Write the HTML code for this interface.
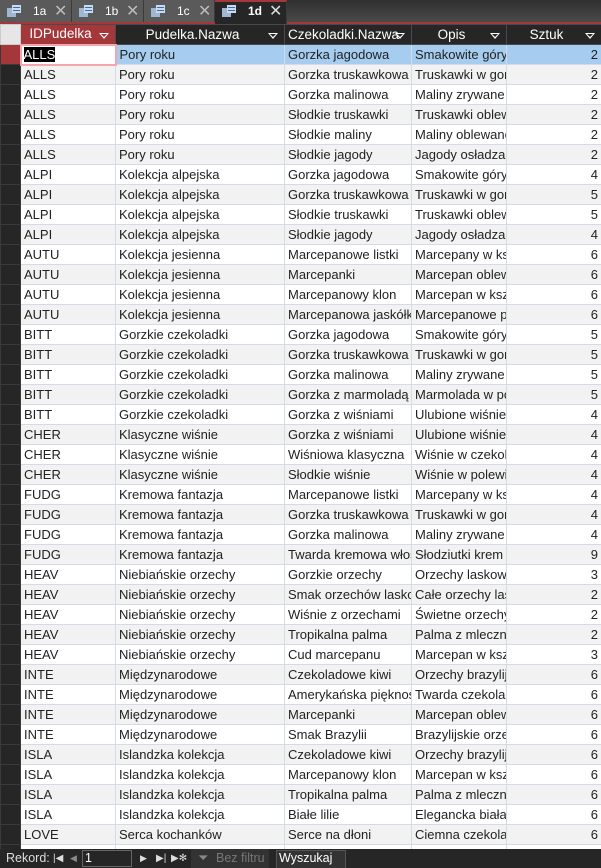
<!DOCTYPE html>
<html><head><meta charset="utf-8"><style>
*{margin:0;padding:0;box-sizing:border-box}
body{width:601px;height:868px;overflow:hidden;background:#262626;font-family:"Liberation Sans",sans-serif;font-size:13px;position:relative}
.tabs{position:absolute;left:0;top:0;width:601px;height:24px;background:linear-gradient(#2f2f2f,#4a4a4a);border-bottom:2px solid #a4373a}
.tab{position:absolute;top:0;height:22px;background:#5a5a5a;color:#fff;font-size:12px;border-right:1px solid #3a3a3a}
.tab.act{background:#262626;border-top:2px solid #a4373a;height:24px}
.tab .ic{position:absolute;left:7px;top:5px;width:14px;height:12px}
.tab .lb{position:absolute;left:33px;top:4px}
.tab .x{position:absolute;left:54px;top:1px;font-size:16px;color:#bbb}
table{position:absolute;left:0;top:24px;width:601px;border-collapse:collapse;table-layout:fixed}
td,th{height:20px;padding:0 3px;white-space:nowrap;overflow:hidden;text-overflow:clip;border:1px solid #d5dbe6;line-height:18px;font-weight:normal}
th{background:#262626;color:#fff;border:1px solid #4a4a4a;text-align:center;position:relative;font-size:13.5px;padding-right:18px}
th .dd{position:absolute;right:6px;top:8px;width:0;height:0;border-left:5px solid transparent;border-right:5px solid transparent;border-top:6px solid #fff}
th .dd:after{content:"";position:absolute;left:-3px;top:-5px;border-left:3px solid transparent;border-right:3px solid transparent;border-top:3px solid #262626}
th.r .dd:after{border-top-color:#a4373a}
td{color:#222;background:#fff}
tr:nth-child(odd) td{background:#f2f2f2}
td.s{background:#262626!important;border:1px solid #3a3a3a;padding:0}
td.n{text-align:right}
tr.sel td{background:#a6cdf0}
tr.sel td.s{background:#a4373a!important}
.nav{position:absolute;left:0;top:849px;width:601px;height:19px;background:#262626;color:#ddd;font-size:12.5px}
.nav span{position:absolute;top:2px}
</style></head><body>
<div class="tabs">
<div class="tab" style="left:0;width:72px"><svg class="ic" viewBox="0 0 14 12"><rect x="0" y="3" width="9" height="9" fill="#9fb8d0"/><rect x="5" y="0" width="9" height="8" fill="#c8dcef"/><rect x="6" y="2" width="7" height="1" fill="#46a"/><rect x="6" y="5" width="7" height="1" fill="#46a"/></svg><span class="lb">1a</span><span class="x">✕</span></div>
<div class="tab" style="left:72px;width:72px"><svg class="ic" viewBox="0 0 14 12"><rect x="0" y="3" width="9" height="9" fill="#9fb8d0"/><rect x="5" y="0" width="9" height="8" fill="#c8dcef"/><rect x="6" y="2" width="7" height="1" fill="#46a"/><rect x="6" y="5" width="7" height="1" fill="#46a"/></svg><span class="lb">1b</span><span class="x">✕</span></div>
<div class="tab" style="left:144px;width:71px"><svg class="ic" viewBox="0 0 14 12"><rect x="0" y="3" width="9" height="9" fill="#9fb8d0"/><rect x="5" y="0" width="9" height="8" fill="#c8dcef"/><rect x="6" y="2" width="7" height="1" fill="#46a"/><rect x="6" y="5" width="7" height="1" fill="#46a"/></svg><span class="lb">1c</span><span class="x">✕</span></div>
<div class="tab act" style="left:215px;width:72px"><svg class="ic" viewBox="0 0 14 12" style="top:3px"><rect x="0" y="3" width="9" height="9" fill="#9fb8d0"/><rect x="5" y="0" width="9" height="8" fill="#c8dcef"/><rect x="6" y="2" width="7" height="1" fill="#46a"/><rect x="6" y="5" width="7" height="1" fill="#46a"/></svg><span class="lb" style="top:2px;font-weight:bold">1d</span><span class="x" style="top:-1px;color:#ddd">✕</span></div>
</div>
<table>
<colgroup><col style="width:20px"><col style="width:95px"><col style="width:169px"><col style="width:127px"><col style="width:95px"><col style="width:95px"></colgroup>
<tr><th style="background:#e6e6e6;border-color:#ccc;padding:0"></th><th class="r" style="background:#a4373a">IDPudelka<i class="dd"></i></th><th>Pudelka.Nazwa<i class="dd"></i></th><th style="text-align:left">Czekoladki.Nazwa<i class="dd"></i></th><th>Opis<i class="dd"></i></th><th>Sztuk<i class="dd"></i></th></tr>
<tr class="sel"><td class="s"></td><td style="background:#fff;border:2px solid #f4a6ae;padding:0 2px"><span style="background:#000;color:#fff">ALLS</span></td><td>Pory roku</td><td>Gorzka jagodowa</td><td>Smakowite góry</td><td class="n">2</td></tr>
<tr><td class="s"></td><td>ALLS</td><td>Pory roku</td><td>Gorzka truskawkowa</td><td>Truskawki w gorzkiej</td><td class="n">2</td></tr>
<tr><td class="s"></td><td>ALLS</td><td>Pory roku</td><td>Gorzka malinowa</td><td>Maliny zrywane</td><td class="n">2</td></tr>
<tr><td class="s"></td><td>ALLS</td><td>Pory roku</td><td>Słodkie truskawki</td><td>Truskawki oblewane</td><td class="n">2</td></tr>
<tr><td class="s"></td><td>ALLS</td><td>Pory roku</td><td>Słodkie maliny</td><td>Maliny oblewane</td><td class="n">2</td></tr>
<tr><td class="s"></td><td>ALLS</td><td>Pory roku</td><td>Słodkie jagody</td><td>Jagody osładzane</td><td class="n">2</td></tr>
<tr><td class="s"></td><td>ALPI</td><td>Kolekcja alpejska</td><td>Gorzka jagodowa</td><td>Smakowite góry</td><td class="n">4</td></tr>
<tr><td class="s"></td><td>ALPI</td><td>Kolekcja alpejska</td><td>Gorzka truskawkowa</td><td>Truskawki w gorzkiej</td><td class="n">5</td></tr>
<tr><td class="s"></td><td>ALPI</td><td>Kolekcja alpejska</td><td>Słodkie truskawki</td><td>Truskawki oblewane</td><td class="n">5</td></tr>
<tr><td class="s"></td><td>ALPI</td><td>Kolekcja alpejska</td><td>Słodkie jagody</td><td>Jagody osładzane</td><td class="n">4</td></tr>
<tr><td class="s"></td><td>AUTU</td><td>Kolekcja jesienna</td><td>Marcepanowe listki</td><td>Marcepany w kształcie</td><td class="n">6</td></tr>
<tr><td class="s"></td><td>AUTU</td><td>Kolekcja jesienna</td><td>Marcepanki</td><td>Marcepan oblewany</td><td class="n">6</td></tr>
<tr><td class="s"></td><td>AUTU</td><td>Kolekcja jesienna</td><td>Marcepanowy klon</td><td>Marcepan w kształcie</td><td class="n">6</td></tr>
<tr><td class="s"></td><td>AUTU</td><td>Kolekcja jesienna</td><td>Marcepanowa jaskółka</td><td>Marcepanowe ptaszki</td><td class="n">6</td></tr>
<tr><td class="s"></td><td>BITT</td><td>Gorzkie czekoladki</td><td>Gorzka jagodowa</td><td>Smakowite góry</td><td class="n">5</td></tr>
<tr><td class="s"></td><td>BITT</td><td>Gorzkie czekoladki</td><td>Gorzka truskawkowa</td><td>Truskawki w gorzkiej</td><td class="n">5</td></tr>
<tr><td class="s"></td><td>BITT</td><td>Gorzkie czekoladki</td><td>Gorzka malinowa</td><td>Maliny zrywane</td><td class="n">5</td></tr>
<tr><td class="s"></td><td>BITT</td><td>Gorzkie czekoladki</td><td>Gorzka z marmoladą</td><td>Marmolada w polewie</td><td class="n">5</td></tr>
<tr><td class="s"></td><td>BITT</td><td>Gorzkie czekoladki</td><td>Gorzka z wiśniami</td><td>Ulubione wiśnie</td><td class="n">4</td></tr>
<tr><td class="s"></td><td>CHER</td><td>Klasyczne wiśnie</td><td>Gorzka z wiśniami</td><td>Ulubione wiśnie</td><td class="n">4</td></tr>
<tr><td class="s"></td><td>CHER</td><td>Klasyczne wiśnie</td><td>Wiśniowa klasyczna</td><td>Wiśnie w czekoladzie</td><td class="n">4</td></tr>
<tr><td class="s"></td><td>CHER</td><td>Klasyczne wiśnie</td><td>Słodkie wiśnie</td><td>Wiśnie w polewie</td><td class="n">4</td></tr>
<tr><td class="s"></td><td>FUDG</td><td>Kremowa fantazja</td><td>Marcepanowe listki</td><td>Marcepany w kształcie</td><td class="n">4</td></tr>
<tr><td class="s"></td><td>FUDG</td><td>Kremowa fantazja</td><td>Gorzka truskawkowa</td><td>Truskawki w gorzkiej</td><td class="n">4</td></tr>
<tr><td class="s"></td><td>FUDG</td><td>Kremowa fantazja</td><td>Gorzka malinowa</td><td>Maliny zrywane</td><td class="n">4</td></tr>
<tr><td class="s"></td><td>FUDG</td><td>Kremowa fantazja</td><td>Twarda kremowa włoska</td><td>Słodziutki krem</td><td class="n">9</td></tr>
<tr><td class="s"></td><td>HEAV</td><td>Niebiańskie orzechy</td><td>Gorzkie orzechy</td><td>Orzechy laskowe</td><td class="n">3</td></tr>
<tr><td class="s"></td><td>HEAV</td><td>Niebiańskie orzechy</td><td>Smak orzechów laskowych</td><td>Całe orzechy laskowe</td><td class="n">2</td></tr>
<tr><td class="s"></td><td>HEAV</td><td>Niebiańskie orzechy</td><td>Wiśnie z orzechami</td><td>Świetne orzechy</td><td class="n">2</td></tr>
<tr><td class="s"></td><td>HEAV</td><td>Niebiańskie orzechy</td><td>Tropikalna palma</td><td>Palma z mleczną</td><td class="n">2</td></tr>
<tr><td class="s"></td><td>HEAV</td><td>Niebiańskie orzechy</td><td>Cud marcepanu</td><td>Marcepan w kształcie</td><td class="n">3</td></tr>
<tr><td class="s"></td><td>INTE</td><td>Międzynarodowe</td><td>Czekoladowe kiwi</td><td>Orzechy brazylijskie</td><td class="n">6</td></tr>
<tr><td class="s"></td><td>INTE</td><td>Międzynarodowe</td><td>Amerykańska piękność</td><td>Twarda czekolada</td><td class="n">6</td></tr>
<tr><td class="s"></td><td>INTE</td><td>Międzynarodowe</td><td>Marcepanki</td><td>Marcepan oblewany</td><td class="n">6</td></tr>
<tr><td class="s"></td><td>INTE</td><td>Międzynarodowe</td><td>Smak Brazylii</td><td>Brazylijskie orzechy</td><td class="n">6</td></tr>
<tr><td class="s"></td><td>ISLA</td><td>Islandzka kolekcja</td><td>Czekoladowe kiwi</td><td>Orzechy brazylijskie</td><td class="n">6</td></tr>
<tr><td class="s"></td><td>ISLA</td><td>Islandzka kolekcja</td><td>Marcepanowy klon</td><td>Marcepan w kształcie</td><td class="n">6</td></tr>
<tr><td class="s"></td><td>ISLA</td><td>Islandzka kolekcja</td><td>Tropikalna palma</td><td>Palma z mleczną</td><td class="n">6</td></tr>
<tr><td class="s"></td><td>ISLA</td><td>Islandzka kolekcja</td><td>Białe lilie</td><td>Elegancka biała</td><td class="n">6</td></tr>
<tr><td class="s"></td><td>LOVE</td><td>Serca kochanków</td><td>Serce na dłoni</td><td>Ciemna czekolada</td><td class="n">6</td></tr>
<tr><td class="s"></td><td>LOVE</td><td>Serca kochanków</td><td>Serce</td><td>Serce</td><td class="n">6</td></tr>
</table>
<div class="nav">
<span style="left:6px">Rekord:</span>
<span style="left:53px;font-size:10px;top:4px">|◀</span>
<span style="left:70px;font-size:9px;top:4px;color:#888">◀</span>
<div style="position:absolute;left:82px;top:1px;width:50px;height:17px;border:1px solid #666;background:#262626;color:#fff;padding-left:2px;line-height:15px">1</div>
<span style="left:140px;font-size:9px;top:4px">▶</span>
<span style="left:156px;font-size:10px;top:4px">▶|</span>
<span style="left:171px;font-size:10px;top:4px">▶✻</span>
<div style="position:absolute;left:191px;top:0;width:78px;height:19px;background:#333"></div>
<span style="left:198px;color:#888;font-size:13px;top:1px">⏷</span>
<span style="left:216px;color:#777">Bez filtru</span>
<div style="position:absolute;left:276px;top:1px;width:70px;height:18px;background:#333;border:1px solid #555;border-bottom:none"></div>
<span style="left:279px;color:#fff">Wyszukaj</span>
</div>
</body></html>
